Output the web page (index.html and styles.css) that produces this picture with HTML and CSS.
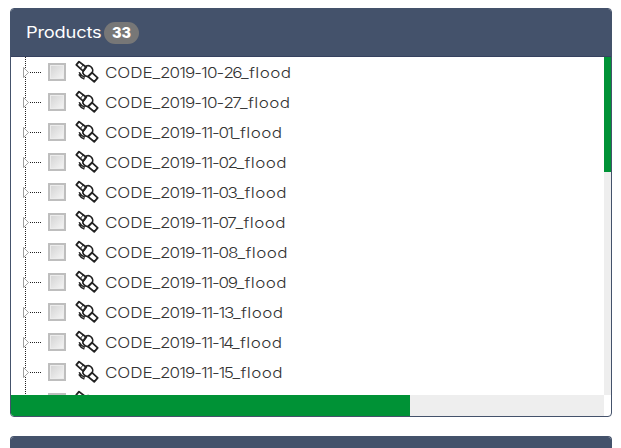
FILE: index.html
```html
<!DOCTYPE html>
<html lang="en">
<head>
<meta charset="utf-8">
<title>Products</title>
<link rel="stylesheet" href="styles.css">
</head>
<body>
<svg class="defs" width="0" height="0">
  <symbol id="satellite" viewBox="0 0 24 24">
    <g fill="none" stroke="#222" stroke-width="1.8" stroke-linejoin="round">
      <path d="M4 1.6 11.3 7.3 8.2 11.2 1.3 4.9Z"/>
      <path d="M17 12.6 22.7 17.9 19.2 21.8 13 16.6Z"/>
      <path d="M5.3 8.5 8.2 4.9" stroke-width="1"/>
      <path d="M11.3 6Q14 4.8 16.2 7T17.4 12.2L13 16.6Q10.4 16.6 8.8 14.6T8.2 11Z" stroke-width="1.6"/>
      <path d="M4.2 12.2Q5.4 15.2 10 17.2M3.8 14.4Q5.6 17.6 9.4 19" stroke-width="1.5"/>
    </g>
  </symbol>
</svg>
<section class="panel">
  <header class="panel-header"><span class="title"><span class="title-text">Products</span></span><span class="badge">33</span></header>
  <div class="panel-body">
    <ul class="tree" id="tree"></ul>
    <div class="track-y"><div class="thumb-y"></div></div>
    <div class="track-x"><div class="thumb-x"></div></div>
    <div class="corner"></div>
  </div>
</section>
<section class="panel next"><header class="panel-header"></header></section>
<script src="tree.js"></script>
</body>
</html>
```
FILE: tree.js
```js
// Each entry: month, day, label width in pixels
const products = [
  ['10', '26', 186], ['10', '27', 185], ['11', '01', 177], ['11', '02', 181.5],
  ['11', '03', 181.5], ['11', '07', 180.5], ['11', '08', 182.5], ['11', '09', 181.5],
  ['11', '13', 178], ['11', '14', 177], ['11', '15', 177.5], null
];
const stretch = 1.18;
const tree = document.getElementById('tree');

// Spreads a text over the given width by its letter spacing
function fit(element, width) {
  const natural = element.getBoundingClientRect().width;
  element.style.letterSpacing = `${(width - natural) / element.textContent.length / stretch}px`;
}

for (const product of products) {
  const row = document.createElement('li');
  row.className = 'row';
  row.innerHTML = `<svg class="branch" width="24" height="30" viewBox="0 0 24 30">
    <path d="M1.5 10.5v10l5-5z" fill="#fff" stroke="#a0a0a0"/>
    <path d="M8 15.5H20" stroke="#222" stroke-dasharray="1 1" shape-rendering="crispEdges"/></svg>
    <span class="checkbox"></span>
    <svg class="icon" width="24" height="24"><use href="#satellite"/></svg>`;
  tree.append(row);
  if (!product) continue;
  const [month, day, width] = product;
  const monthWidth = month === '10' ? 22.5 : 17.5;
  const parts = [['CODE_', 55], ['2019-', 41], [month + '-', monthWidth],
    [day, width - 146 - monthWidth], ['_flood', 50.5]];
  const label = document.createElement('span');
  label.className = 'label';
  row.append(label);
  for (const [text, partWidth] of parts) {
    const part = document.createElement('span');
    part.textContent = text;
    label.append(part);
    fit(part, partWidth);
  }
}
fit(document.querySelector('.title-text'), 75.5);
```
FILE: styles.css
```css
* { box-sizing: border-box; }
body {
  margin: 0;
  padding: 8px 9px 0 10px;
  height: 448px;
  overflow: hidden;
  background: #fff;
  font-family: Inter, "Liberation Sans", sans-serif;
  color: #333;
}
.defs { position: absolute; }
.panel {
  height: 409px;
  border: 1px solid #44526b;
  border-radius: 4px;
  overflow: hidden;
}
.next {
  height: 12px;
  margin-top: 19px;
  border-bottom: 0;
  border-radius: 4px 4px 0 0;
}
.panel-header {
  display: flex;
  align-items: center;
  height: 48px;
  padding-left: 15px;
  background: #44526b;
  border-bottom: 1px solid #36415f;
  color: #fff;
}
.title {
  width: 78px;
  font-size: 15.5px;
}
.title-text {
  display: inline-block;
  transform: scaleX(1.18);
  transform-origin: 0 0;
}
.badge {
  width: 35px;
  height: 22px;
  border-radius: 11px;
  background: #777;
  font-size: 14.5px;
  line-height: 22px;
  font-weight: 800;
  text-align: center;
}
.panel-body {
  display: grid;
  grid-template: 338px 21px / 593px 7px;
}
.tree {
  margin: 0;
  padding: 0;
  list-style: none;
  overflow: hidden;
  background: repeating-linear-gradient(#222 0 1px, #fff 1px 2px) 14px 0 / 1px 100% no-repeat;
}
.row {
  display: flex;
  align-items: center;
  height: 30px;
  padding-left: 11px;
}
.branch { flex: none; }
.checkbox {
  flex: none;
  width: 18px;
  height: 18px;
  margin: 0 9px 0 2px;
  border: 2px solid #bebebe;
  background: linear-gradient(135deg, #d2d2d2, #f6f6f6);
  box-shadow: inset 0 0 0 1px #ececec;
}
.icon { flex: none; }
.label {
  margin-left: 5.5px;
  font-size: 14.5px;
  font-weight: 300;
  white-space: nowrap;
  transform: scaleX(1.18);
  transform-origin: 0 0;
}
.track-y, .track-x { background: #eee; }
.thumb-y { height: 115px; background: #009236; }
.thumb-x { width: 399px; height: 21px; background: #009236; }
```
